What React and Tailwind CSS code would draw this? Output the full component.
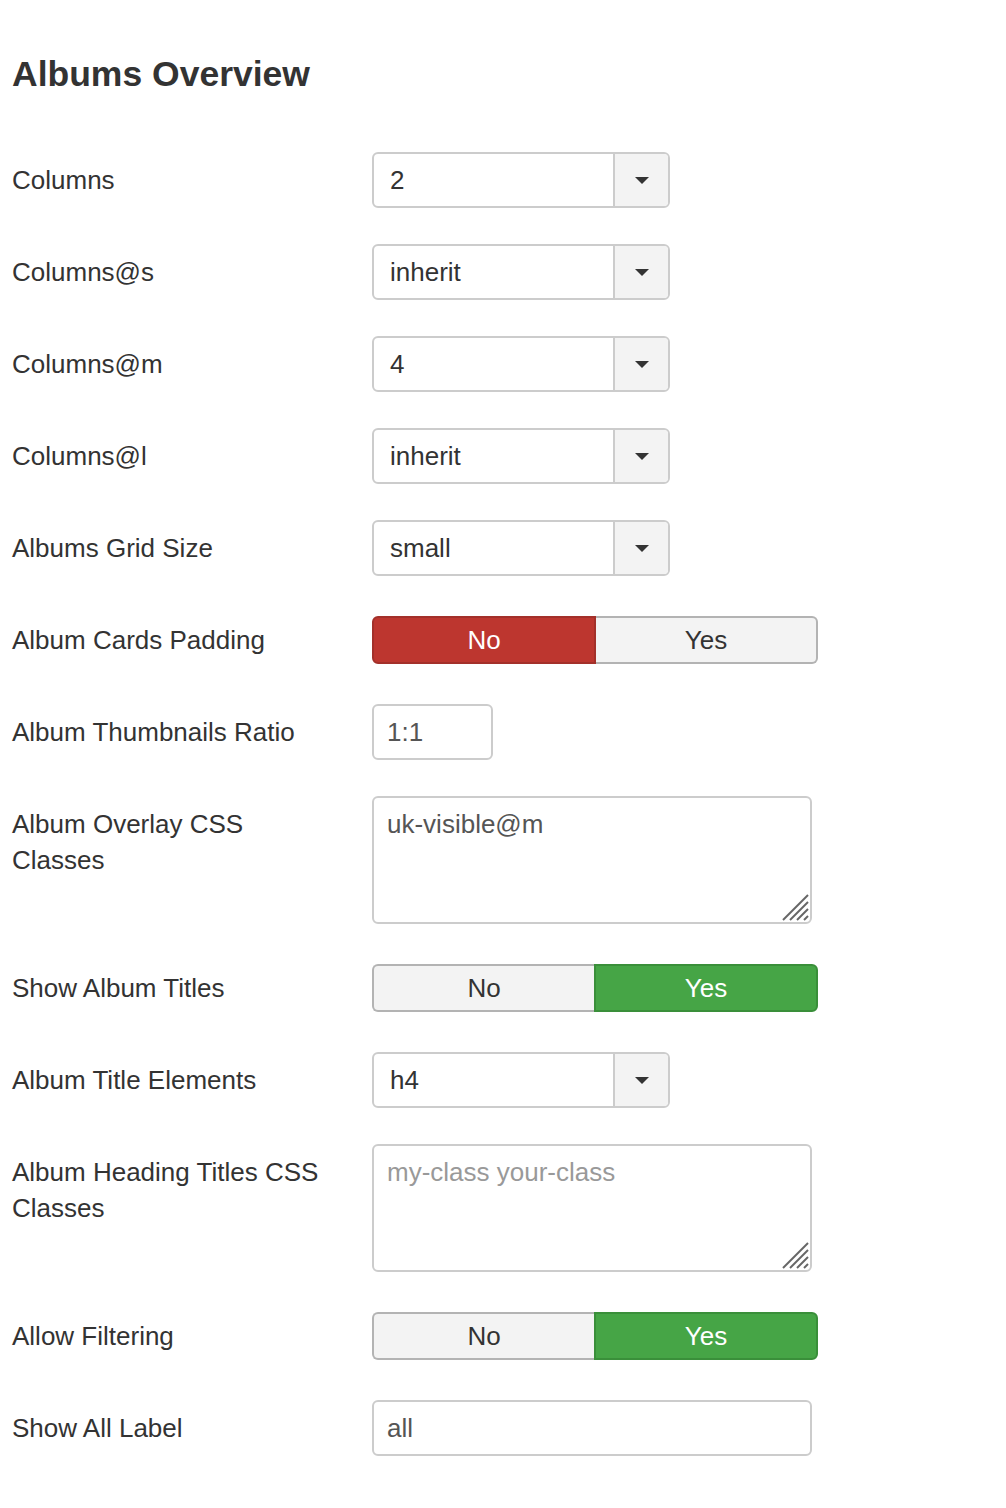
import React from "react";

const font = { fontFamily: '"Liberation Sans", Arial, Helvetica, sans-serif' };

function Select({ value }) {
  return (
    <div className="flex h-[56px] w-[298px] rounded-[6px] border-2 border-[#cccccc] bg-white overflow-hidden">
      <div className="flex-1 flex items-center pl-[16px] text-[26px] text-[#333333]">{value}</div>
      <div className="w-[55px] flex items-center justify-center bg-[#f3f3f3] border-l-2 border-[#cccccc]">
        <svg width="14" height="7" viewBox="0 0 14 7">
          <path d="M0 0 L14 0 L7 7 Z" fill="#333333" />
        </svg>
      </div>
    </div>
  );
}

function Toggle({ value }) {
  const no = value === "no";
  return (
    <div className="mt-[4px] flex h-[48px] w-[446px] text-[26px]">
      <div
        className={
          no
            ? "flex-1 flex items-center justify-center rounded-l-[6px] border-2 border-[#a3302a] bg-[#bd362f] text-white"
            : "flex-1 flex items-center justify-center rounded-l-[6px] border-2 border-r-0 border-[#b3b3b3] bg-[#f3f3f3] text-[#333333]"
        }
      >
        No
      </div>
      <div
        className={
          no
            ? "flex-1 flex items-center justify-center rounded-r-[6px] border-2 border-l-0 border-[#b3b3b3] bg-[#f3f3f3] text-[#333333]"
            : "flex-1 flex items-center justify-center rounded-r-[6px] border-2 border-[#3a8f3a] bg-[#46a546] text-white"
        }
      >
        Yes
      </div>
    </div>
  );
}

function TextInput({ value, width }) {
  return (
    <div className={`${width} h-[56px] flex items-center rounded-[6px] border-2 border-[#cccccc] bg-white pl-[13px] text-[26px] text-[#555555]`}>
      {value}
    </div>
  );
}

function TextArea({ value, placeholder }) {
  return (
    <div className="relative w-[440px] h-[128px]">
      <textarea
        readOnly
        value={value}
        placeholder={placeholder}
        className="w-full h-full resize-none rounded-[6px] border-2 border-[#cccccc] bg-white px-[13px] pt-[8px] text-[26px] leading-[36px] text-[#555555] placeholder:text-[#999999] outline-none"
        style={font}
      />
      <svg className="absolute right-[3px] bottom-[3px]" width="28" height="28" viewBox="0 0 28 28">
        <line x1="2" y1="27" x2="27" y2="2" stroke="#666" strokeWidth="2" />
        <line x1="9" y1="27" x2="27" y2="9" stroke="#666" strokeWidth="2" />
        <line x1="16" y1="27" x2="27" y2="16" stroke="#666" strokeWidth="2" />
        <line x1="23" y1="27" x2="27" y2="23" stroke="#666" strokeWidth="2" />
      </svg>
    </div>
  );
}

function Row({ label, children }) {
  return (
    <div className="flex items-start min-h-[56px] mb-[36px]">
      <div className="w-[316px] mr-[44px] pt-[10px] text-[26px] leading-[36px] text-[#333333]">{label}</div>
      <div>{children}</div>
    </div>
  );
}

export default function App() {
  return (
    <div className="bg-white min-h-[1508px] px-[12px] pt-[52px]" style={font}>
      <h2 className="text-[35.5px] leading-[44px] font-bold text-[#333333] mb-[56px]">Albums Overview</h2>

      <Row label="Columns"><Select value="2" /></Row>
      <Row label="Columns@s"><Select value="inherit" /></Row>
      <Row label="Columns@m"><Select value="4" /></Row>
      <Row label="Columns@l"><Select value="inherit" /></Row>
      <Row label="Albums Grid Size"><Select value="small" /></Row>
      <Row label="Album Cards Padding"><Toggle value="no" /></Row>
      <Row label="Album Thumbnails Ratio"><TextInput value="1:1" width="w-[121px]" /></Row>
      <Row label="Album Overlay CSS Classes"><TextArea value="uk-visible@m" /></Row>
      <Row label="Show Album Titles"><Toggle value="yes" /></Row>
      <Row label="Album Title Elements"><Select value="h4" /></Row>
      <Row label="Album Heading Titles CSS Classes"><TextArea value="" placeholder="my-class your-class" /></Row>
      <Row label="Allow Filtering"><Toggle value="yes" /></Row>
      <Row label="Show All Label"><TextInput value="all" width="w-[440px]" /></Row>
    </div>
  );
}
